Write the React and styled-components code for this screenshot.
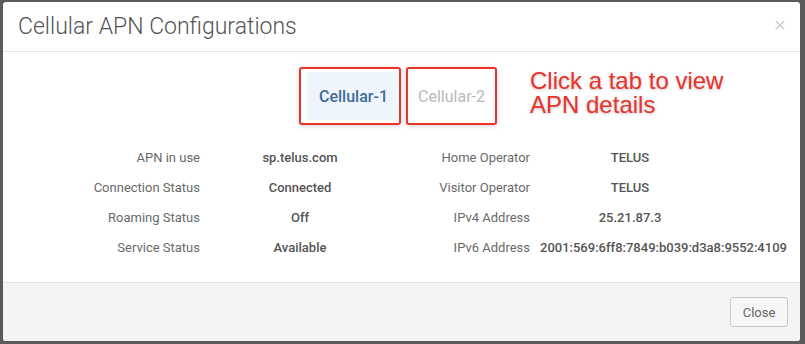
import React, { useState } from "react";
import styled, { createGlobalStyle } from "styled-components";

const GlobalStyle = createGlobalStyle`
    html, body {
        margin: 0;
        padding: 0;
        background: #5b5b5b;
        font-family: Roboto, "Liberation Sans", Arial, sans-serif;
    }
`;

const Backdrop = styled.div`
    width: 805px;
    height: 344px;
    padding: 2px 5px 3px 3px;
    box-sizing: border-box;
`;

const Modal = styled.div`
    position: relative;
    height: 100%;
    background: #fff;
    border-radius: 3px;
    display: flex;
    flex-direction: column;
    overflow: hidden;
`;

const Header = styled.div`
    height: 49px;
    display: flex;
    align-items: center;
    justify-content: space-between;
    padding: 0 14px 0 15px;
    border-bottom: 1px solid #e5e5e5;
`;

const Title = styled.h4`
    margin: 0;
    font-size: 23px;
    font-weight: 300;
    color: #555;
`;

const CloseX = styled.button`
    border: none;
    background: none;
    padding: 0 0 5px 0;
    font-family: "Liberation Sans", Arial, sans-serif;
    font-size: 21px;
    line-height: 1;
    color: #d0d0d0;
    cursor: pointer;
`;

const Body = styled.div`
    flex: 1;
    padding: 15px 15px 0 15px;
`;

const Tabs = styled.div`
    display: flex;
    justify-content: center;
    gap: 5px;
    margin-left: -7px;
`;

const Tab = styled.button`
    height: 58px;
    width: ${p => p.w}px;
    box-sizing: border-box;
    border: 2px solid #e8342c;
    border-radius: 3px;
    background: #fff;
    padding: ${p => (p.active ? "3px 2px 3px 6px" : "3px")};
    box-shadow: 0 1px 5px rgba(0, 0, 0, 0.18);
    cursor: pointer;
    display: flex;
`;

const TabFace = styled.span`
    flex: 1;
    display: flex;
    align-items: center;
    justify-content: center;
    padding: 1px 0 0 ${p => (p.active ? 3 : 0)}px;
    font-family: Roboto, sans-serif;
    font-size: 16px;
    font-weight: ${p => (p.active ? 500 : 400)};
    color: ${p => (p.active ? "#3f6d96" : "#bababa")};
    background: ${p => (p.active ? "#eef5fd" : "#fff")};
`;

const Hint = styled.div`
    position: absolute;
    left: 527px;
    top: 67px;
    font-family: "Liberation Sans", Arial, sans-serif;
    font-size: 24px;
    line-height: 24px;
    color: #e8342c;
    text-shadow: 0 1px 3px rgba(0, 0, 0, 0.25);
`;

const Grid = styled.div`
    display: grid;
    grid-template-columns: 182px 180px 130px 180px;
    grid-auto-rows: 30px;
    column-gap: 10px;
    margin-top: 17px;
    align-items: center;
    font-size: 13px;
`;

const Label = styled.div`
    text-align: right;
    color: #6a6a6a;
    white-space: nowrap;
`;

const Value = styled.div`
    text-align: center;
    color: #555;
    font-weight: 500;
    white-space: nowrap;
`;

const Footer = styled.div`
    height: 59px;
    box-sizing: border-box;
    background: #f4f4f4;
    border-top: 1px solid #e2e2e2;
    display: flex;
    justify-content: flex-end;
    align-items: flex-start;
    padding: 14px 12px 0 0;
`;

const Button = styled.button`
    width: 58px;
    height: 30px;
    border: 1px solid #c9c9c9;
    border-radius: 3px;
    background: #f6f6f6;
    color: #666;
    font-family: Roboto, sans-serif;
    font-size: 13px;
    cursor: pointer;
`;

const rows = [
    ["APN in use", "sp.telus.com", "Home Operator", "TELUS"],
    ["Connection Status", "Connected", "Visitor Operator", "TELUS"],
    ["Roaming Status", "Off", "IPv4 Address", "25.21.87.3"],
    ["Service Status", "Available", "IPv6 Address", "2001:569:6ff8:7849:b039:d3a8:9552:4109"]
];

export default function App() {
    const [tab, setTab] = useState(0);

    return (
        <Backdrop>
            <GlobalStyle />
            <Modal>
                <Header>
                    <Title>Cellular APN Configurations</Title>
                    <CloseX>×</CloseX>
                </Header>
                <Body>
                    <Tabs>
                        <Tab w={102} active={tab === 0} onClick={() => setTab(0)}>
                            <TabFace active={tab === 0}>Cellular-1</TabFace>
                        </Tab>
                        <Tab w={91} active={tab === 1} onClick={() => setTab(1)}>
                            <TabFace active={tab === 1}>Cellular-2</TabFace>
                        </Tab>
                    </Tabs>
                    <Grid>
                        {rows.map(r => (
                            <React.Fragment key={r[0]}>
                                <Label>{r[0]}</Label>
                                <Value>{r[1]}</Value>
                                <Label>{r[2]}</Label>
                                <Value>{r[3]}</Value>
                            </React.Fragment>
                        ))}
                    </Grid>
                </Body>
                <Footer>
                    <Button>Close</Button>
                </Footer>
                <Hint>
                    Click a tab to view
                    <br />
                    APN details
                </Hint>
            </Modal>
        </Backdrop>
    );
}
